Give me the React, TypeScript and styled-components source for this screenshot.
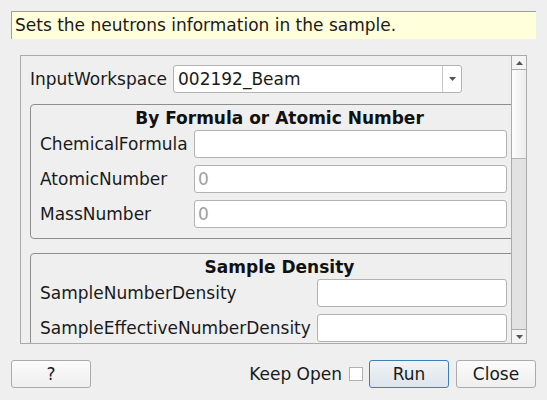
import React from "react";
import styled, { createGlobalStyle } from "styled-components";

const GlobalStyle = createGlobalStyle`
    html, body {
        margin: 0;
        padding: 0;
        background: #efefef;
    }
    body {
        font-family: "DejaVu Sans", "Liberation Sans", sans-serif;
        font-size: 17px;
        color: #1a1a1a;
    }
`;

const Dialog = styled.div`
    width: 547px;
    height: 400px;
    box-sizing: border-box;
    padding: 11px 11px 0 11px;
    display: flex;
    flex-direction: column;
    background: #efefef;
`;

const Tip = styled.div`
    height: 28px;
    box-sizing: border-box;
    border-top: 1px solid #9e9e9e;
    border-left: 1px solid #9e9e9e;
    background: #ffffdc;
    padding-left: 3px;
    line-height: 27px;
    white-space: nowrap;
`;

const ScrollFrame = styled.div`
    margin: 16px 9px 0 9px;
    height: 289px;
    box-sizing: border-box;
    border: 1px solid #ababab;
    display: flex;
`;

const Viewport = styled.div`
    flex: 1;
    overflow: hidden;
    padding: 9px 0 0 9px;
`;

const ScrollBar = styled.div`
    width: 14px;
    display: flex;
    flex-direction: column;
    border-left: 1px solid #ababab;
    background: #e2e2e2;
`;

const ArrowBtn = styled.div<{ $down?: boolean }>`
    height: 13px;
    display: flex;
    align-items: center;
    justify-content: center;
    background: #f4f4f4;
    border-top: ${(p) => (p.$down ? "1px solid #ababab" : "none")};
    border-bottom: ${(p) => (p.$down ? "none" : "1px solid #ababab")};
`;

const Handle = styled.div`
    height: 88px;
    background: linear-gradient(to right, #fdfdfd, #ececec);
    border-bottom: 1px solid #b4b4b4;
`;

const Track = styled.div`
    flex: 1;
`;

const Content = styled.div`
    width: 512px;
    display: flex;
    flex-direction: column;
`;

const Row = styled.div`
    display: flex;
    align-items: center;
    height: 28px;
`;

const Label = styled.div<{ $w: number }>`
    width: ${(p) => p.$w}px;
    flex-shrink: 0;
    white-space: nowrap;
`;

const Combo = styled.div`
    width: 289px;
    height: 28px;
    box-sizing: border-box;
    border: 1px solid #b3b3b3;
    border-radius: 3px;
    background: #fff;
    display: flex;
    align-items: stretch;
`;

const ComboText = styled.div`
    flex: 1;
    padding-left: 4px;
    line-height: 26px;
`;

const ComboDrop = styled.div`
    width: 18px;
    border-left: 1px solid #c9c9c9;
    display: flex;
    align-items: center;
    justify-content: center;
`;

const Group = styled.div<{ $top: number }>`
    margin-top: ${(p) => p.$top}px;
    border: 1px solid #8e8e8e;
    border-radius: 4px;
    padding: 4px 22px 10px 9px;
    display: flex;
    flex-direction: column;
    gap: 7px;
`;

const GroupTitle = styled.div`
    font-weight: bold;
    text-align: center;
    line-height: 19px;
    margin-bottom: -5px;
    color: #111;
`;

const Field = styled.div<{ $w: number }>`
    width: ${(p) => p.$w}px;
    height: 28px;
    box-sizing: border-box;
    border: 1px solid #b3b3b3;
    border-radius: 3px;
    background: #fff;
    padding-left: 3px;
    line-height: 26px;
    color: #a0a0a0;
`;

const Footer = styled.div`
    margin-top: 16px;
    display: flex;
    align-items: center;
    height: 28px;
`;

const Button = styled.div<{ $primary?: boolean; $gap?: number }>`
    width: 80px;
    height: 28px;
    margin-left: ${(p) => p.$gap ?? 0}px;
    box-sizing: border-box;
    border: 1px solid ${(p) => (p.$primary ? "#3c7fb8" : "#ababab")};
    border-radius: 3px;
    background: ${(p) =>
        p.$primary
            ? "linear-gradient(#f1f4f7, #dde4eb)"
            : "linear-gradient(#fbfbfb, #eeeeee)"};
    display: flex;
    align-items: center;
    justify-content: center;
`;

const Spacer = styled.div`
    flex: 1;
`;

const KeepOpen = styled.div`
    margin-right: 7px;
`;

const Check = styled.div`
    width: 12px;
    height: 12px;
    border: 1px solid #b3b3b3;
    background: #fff;
    margin-right: 6px;
`;

const Tri = ({ down }: { down?: boolean }) => (
    <svg width="7" height="4" viewBox="0 0 7 4">
        <path d={down ? "M0 0 L7 0 L3.5 4 Z" : "M0 4 L7 4 L3.5 0 Z"} fill="#555" />
    </svg>
);

const App: React.FC = () => {
    return (
        <>
            <GlobalStyle />
            <Dialog>
                <Tip>Sets the neutrons information in the sample.</Tip>
                <ScrollFrame>
                    <Viewport>
                        <Content>
                            <Row>
                                <Label $w={143}>InputWorkspace</Label>
                                <Combo>
                                    <ComboText>002192_Beam</ComboText>
                                    <ComboDrop>
                                        <Tri down />
                                    </ComboDrop>
                                </Combo>
                            </Row>
                            <Group $top={11}>
                                <GroupTitle>By Formula or Atomic Number</GroupTitle>
                                <Row>
                                    <Label $w={154}>ChemicalFormula</Label>
                                    <Field $w={313} />
                                </Row>
                                <Row>
                                    <Label $w={154}>AtomicNumber</Label>
                                    <Field $w={313}>0</Field>
                                </Row>
                                <Row>
                                    <Label $w={154}>MassNumber</Label>
                                    <Field $w={313}>0</Field>
                                </Row>
                            </Group>
                            <Group $top={14}>
                                <GroupTitle>Sample Density</GroupTitle>
                                <Row>
                                    <Label $w={277}>SampleNumberDensity</Label>
                                    <Field $w={190} />
                                </Row>
                                <Row>
                                    <Label $w={277}>SampleEffectiveNumberDensity</Label>
                                    <Field $w={190} />
                                </Row>
                            </Group>
                        </Content>
                    </Viewport>
                    <ScrollBar>
                        <ArrowBtn>
                            <Tri />
                        </ArrowBtn>
                        <Handle />
                        <Track />
                        <ArrowBtn $down>
                            <Tri down />
                        </ArrowBtn>
                    </ScrollBar>
                </ScrollFrame>
                <Footer>
                    <Button>?</Button>
                    <Spacer />
                    <KeepOpen>Keep Open</KeepOpen>
                    <Check />
                    <Button $primary>Run</Button>
                    <Button $gap={7}>Close</Button>
                </Footer>
            </Dialog>
        </>
    );
};

export default App;
